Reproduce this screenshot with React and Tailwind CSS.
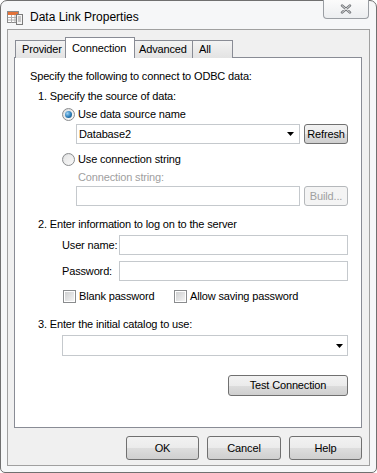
import React from 'react';

function Radio({ checked }) {
  return (
    <span className="relative flex h-[13px] w-[13px] shrink-0 items-center justify-center rounded-full border border-[#8a8c8e] bg-gradient-to-br from-[#d9dadb] to-[#fbfbfb]">
      <span className="h-[9px] w-[9px] rounded-full bg-gradient-to-br from-[#e6e6e6] to-[#f7f7f7]" />
      {checked && (
        <span className="absolute h-[7px] w-[7px] rounded-full bg-[radial-gradient(circle_at_35%_35%,#9fd3f5,#2a7cb8_55%,#14456e)]" />
      )}
    </span>
  );
}

function Checkbox() {
  return (
    <span className="flex h-[13px] w-[13px] shrink-0 items-center justify-center border border-[#8a8c8e] bg-white">
      <span className="h-[9px] w-[9px] bg-gradient-to-br from-[#cfd0d1] to-[#f4f4f4]" />
    </span>
  );
}

function Arrow() {
  return (
    <svg width="7" height="4" viewBox="0 0 7 4" className="shrink-0">
      <path d="M0 0h7L3.5 4z" fill="#000" />
    </svg>
  );
}

function Button({ children, className = '', disabled }) {
  return (
    <div
      className={`flex items-center justify-center rounded-[3px] border ${
        disabled
          ? 'border-[#b5b8bb] bg-[#f4f4f4] text-[#a0a0a0]'
          : 'border-[#707070] bg-[linear-gradient(#f2f2f2_0%,#ebebeb_50%,#dddddd_51%,#cfcfcf_100%)] text-black'
      } ${className}`}
    >
      {children}
    </div>
  );
}

function TitleIcon() {
  return (
    <svg width="16" height="16" viewBox="0 0 16 16" className="shrink-0">
      <rect x="0.5" y="2.5" width="11" height="11" fill="#fff" stroke="#8a8a8a" />
      <rect x="1" y="3" width="10" height="3" fill="#e2733a" />
      <path d="M1 8.5h10M1 11h10M4.5 6v7.5M8 6v7.5" stroke="#b0b0b0" />
      <rect x="9.5" y="5.5" width="6" height="10" fill="#f4f4f4" stroke="#7a7a7a" />
      <path d="M11 8h3M11 10h3M11 12h3" stroke="#9a9a9a" />
    </svg>
  );
}

export default function App() {
  return (
    <div className="h-[473px] w-[377px] bg-white font-['Liberation_Sans',Arial,sans-serif] text-[11px] tracking-[-0.15px] text-black">
      <div className="flex h-[473px] w-[377px] flex-col rounded-t-[7px] rounded-b-[5px] border border-[#707070] bg-[#f6f7f8] px-[6px] pb-[6px]">
        {/* Title bar */}
        <div className="flex h-[28px] items-start justify-between">
          <div className="flex items-center gap-[7px] pt-[7px]">
            <TitleIcon />
            <span className="text-[12px] tracking-[0px] text-black">Data Link Properties</span>
          </div>
          <div className="-mt-px mr-[1px] flex h-[19px] w-[46px] items-center justify-center rounded-b-[4px] border border-t-0 border-[#9a9ea3] bg-[linear-gradient(#fbfbfb,#eceef0)]">
            <svg width="12" height="10" viewBox="0 0 12 10">
              <path d="M2 1.5l8 7M10 1.5l-8 7" stroke="#74777b" strokeWidth="2.4" strokeLinecap="round" />
              <path d="M2 1.5l8 7M10 1.5l-8 7" stroke="#f4f4f4" strokeWidth="0.8" strokeLinecap="round" />
            </svg>
          </div>
        </div>

        {/* Client area */}
        <div className="flex flex-1 flex-col border border-[#a0a0a0] bg-[#f0f0f0] pl-[6px] pr-[7px]">
          {/* Tabs */}
          <div className="relative z-10 mt-[7px] -mb-px flex h-[21px] items-end pl-[1px]">
            <div className="flex h-[18px] w-[51px] items-center border border-b-0 border-[#898c95] bg-[linear-gradient(#f3f3f3,#e3e3e3)] pl-[6px]">
              Provider
            </div>
            <div className="-ml-px flex h-[21px] w-[70px] items-start border border-b-0 border-[#898c95] bg-white pl-[6px] pt-[2px]">
              Connection
            </div>
            <div className="-ml-px flex h-[18px] w-[59px] items-center border border-b-0 border-[#898c95] bg-[linear-gradient(#f3f3f3,#e3e3e3)] pl-[4px]">
              Advanced
            </div>
            <div className="-ml-px flex h-[18px] w-[41px] items-center border border-b-0 border-[#898c95] bg-[linear-gradient(#f3f3f3,#e3e3e3)] pl-[6px]">
              All
            </div>
          </div>

          {/* Tab panel */}
          <div className="flex h-[371px] flex-col border border-[#898c95] bg-white pl-[15px] pr-[13px] pt-[11px]">
            <div className="flex h-[14px] items-center">Specify the following to connect to ODBC data:</div>
            <div className="mt-[6px] flex h-[14px] items-center pl-[8px]">1. Specify the source of data:</div>

            <div className="mt-[4px] flex h-[14px] items-center gap-[3px] pl-[32px]">
              <Radio checked />
              <span>Use data source name</span>
            </div>
            <div className="mt-[3px] flex h-[20px] items-center gap-[4px] pl-[46px]">
              <div className="flex h-[20px] flex-1 items-center justify-between border border-[#c5c9cd] bg-white pl-[2px] pr-[5px]">
                <span>Database2</span>
                <Arrow />
              </div>
              <Button className="h-[20px] w-[44px]">Refresh</Button>
            </div>

            <div className="mt-[8px] flex h-[14px] items-center gap-[3px] pl-[32px]">
              <Radio />
              <span>Use connection string</span>
            </div>
            <div className="mt-[4px] flex h-[14px] items-center pl-[48px] text-[#a0a0a0]">Connection string:</div>
            <div className="mt-[2px] flex h-[20px] items-center gap-[4px] pl-[46px]">
              <div className="h-[20px] flex-1 border border-[#c5c9cd] bg-white" />
              <Button disabled className="h-[20px] w-[44px]">Build...</Button>
            </div>

            <div className="mt-[11px] flex h-[14px] items-center pl-[8px]">2. Enter information to log on to the server</div>
            <div className="mt-[4px] flex h-[20px] items-center pl-[32px]">
              <span className="w-[57px]">User name:</span>
              <div className="h-[20px] flex-1 border border-[#c5c9cd] bg-white" />
            </div>
            <div className="mt-[6px] flex h-[20px] items-center pl-[32px]">
              <span className="w-[57px]">Password:</span>
              <div className="h-[20px] flex-1 border border-[#c5c9cd] bg-white" />
            </div>
            <div className="mt-[8px] flex h-[14px] items-center pl-[33px]">
              <Checkbox />
              <span className="ml-[3px] w-[95px]">Blank password</span>
              <Checkbox />
              <span className="ml-[3px]">Allow saving password</span>
            </div>

            <div className="mt-[14px] flex h-[14px] items-center pl-[8px]">3. Enter the initial catalog to use:</div>
            <div className="mt-[4px] pl-[32px]">
              <div className="flex h-[21px] items-center justify-end border border-[#c5c9cd] bg-white pr-[4px]">
                <Arrow />
              </div>
            </div>

            <div className="mt-[19px] flex justify-end">
              <Button className="h-[21px] w-[120px]">Test Connection</Button>
            </div>
          </div>

          {/* Dialog buttons */}
          <div className="mt-[8px] flex justify-end gap-[8px]">
            <Button className="h-[24px] w-[73px]">OK</Button>
            <Button className="h-[24px] w-[74px]">Cancel</Button>
            <Button className="h-[24px] w-[73px]">Help</Button>
          </div>
        </div>
      </div>
    </div>
  );
}
